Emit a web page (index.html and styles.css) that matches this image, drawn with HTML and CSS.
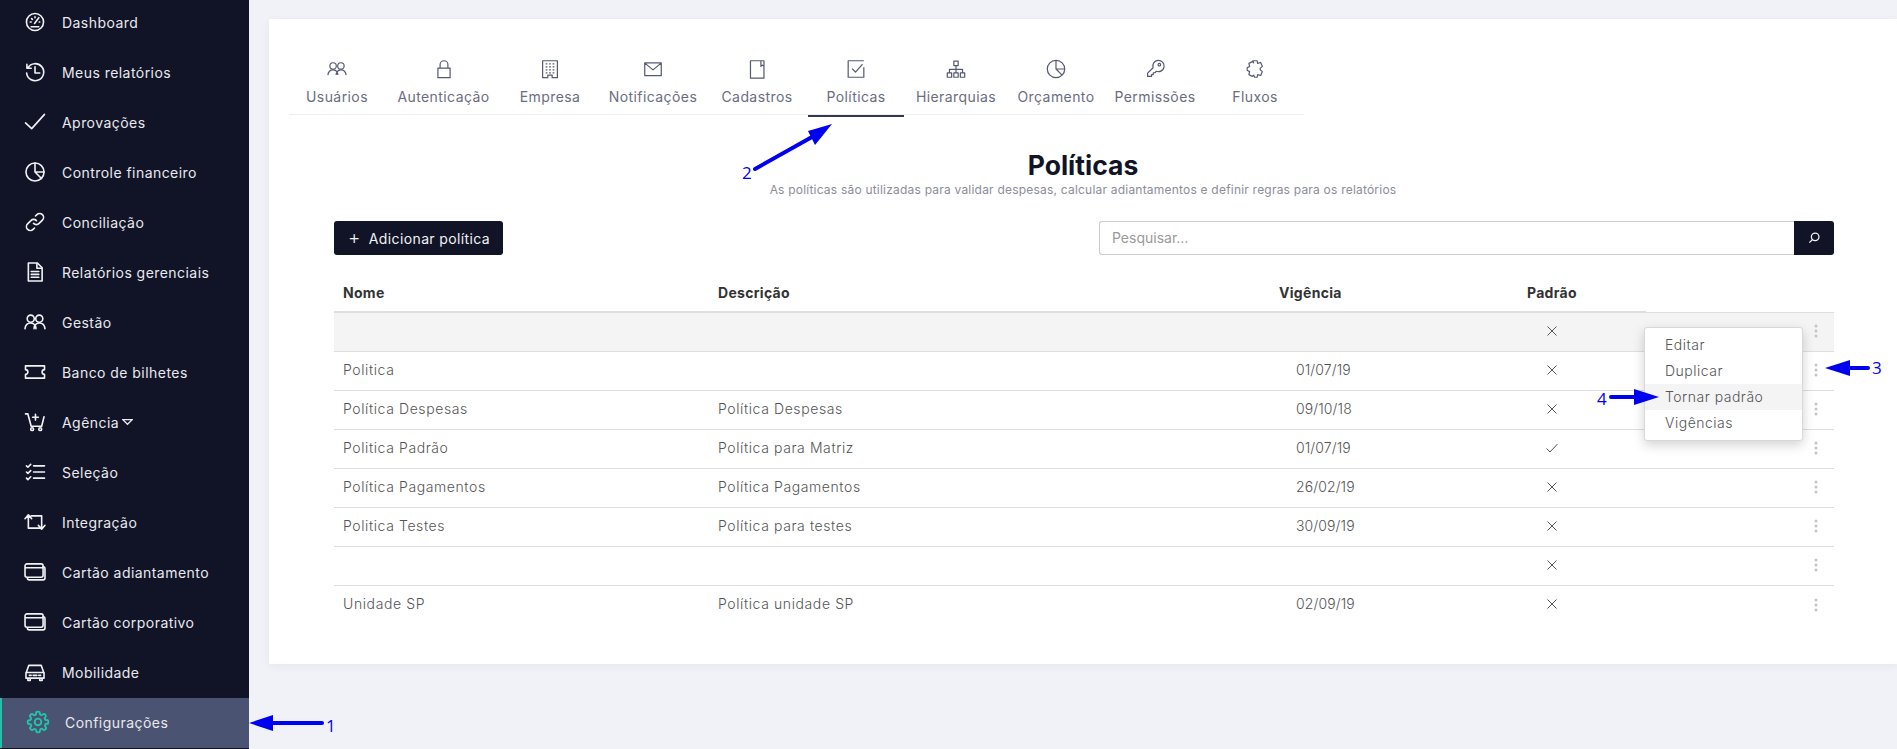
FILE: index.html
```html
<!DOCTYPE html>
<html lang="pt-BR">
<head>
	<meta charset="UTF-8">
	<title>Políticas</title>
	<link rel="stylesheet" href="styles.css">
</head>
<body>
	<div class="app">
		<nav class="sidebar">
			<a class="side-item"><svg class="side-icon" viewBox="0 0 24 24"><circle cx="12" cy="12" r="9"/><path d="M11.500 13.500L16 7.500M7 12h1M8.500 8.500l.7.700M12 6.500v1M16.500 12h.5M8 17h8"/></svg>Dashboard</a>
			<a class="side-item"><svg class="side-icon" viewBox="0 0 24 24"><path d="M4.500 7.500A9 9 0 1 1 3.200 13M3.500 4v4h4.500M12 6.500V13h5"/></svg>Meus relatórios</a>
			<a class="side-item"><svg class="side-icon" viewBox="0 0 24 24"><path d="M2 13l6.500 6L22 4"/></svg>Aprovações</a>
			<a class="side-item"><svg class="side-icon" viewBox="0 0 24 24"><circle cx="12" cy="12" r="9.500"/><path d="M12 2.500V12h9.500M12 12l6.800 6.800"/></svg>Controle financeiro</a>
			<a class="side-item"><svg class="side-icon" viewBox="0 0 24 24"><path d="M10.500 13.500a4 4 0 0 0 5.800 0l3.500-3.500a4.100 4.100 0 0 0-5.800-5.800l-1.500 1.500"/><path d="M13.500 10.500a4 4 0 0 0-5.800 0L4.200 14a4.100 4.100 0 0 0 5.800 5.800l1.500-1.500"/></svg>Conciliação</a>
			<a class="side-item"><svg class="side-icon" viewBox="0 0 24 24"><path d="M5 2.500h9.500l5 5v14H5z"/><path d="M14 3v5h5M8 11.500h8M8 14.500h8M8 17.500h8"/></svg>Relatórios gerenciais</a>
			<a class="side-item"><svg class="side-icon" viewBox="0 0 24 24"><use href="#users"/></svg>Gestão</a>
			<a class="side-item"><svg class="side-icon" viewBox="0 0 24 24"><path d="M2 5.500h20v4a2.500 2.500 0 0 0 0 5v4H2v-4a2.500 2.500 0 0 0 0-5z"/></svg>Banco de bilhetes</a>
			<a class="side-item"><svg class="side-icon" viewBox="0 0 24 24"><path d="M2 3.500h2.500l3.500 13h11l2.500-10M12.500 4v6M9.500 7h6"/><circle cx="9" cy="19.500" r="1.500"/><circle cx="17.500" cy="19.500" r="1.500"/></svg>Agência <svg class="caret" viewBox="0 0 12 8"><path d="M1 1.500h10L6 6.500z"/></svg></a>
			<a class="side-item"><svg class="side-icon" viewBox="0 0 24 24"><path d="M10.500 5.500H22M10.500 12H22M10.500 18.500H22M3 5.500l1.500 1.500 3-3M3 12l1.500 1.500 3-3M3 18.500L4.500 20l3-3"/></svg>Seleção</a>
			<a class="side-item"><svg class="side-icon" viewBox="0 0 24 24"><path d="M1.500 8.500L5 4.500l3.500 4M5 5v13.500h14M22.500 15.500l-3.500 4-3.500-4M19 19V5.500H8"/></svg>Integração</a>
			<a class="side-item"><svg class="side-icon" viewBox="0 0 24 24"><use href="#cards"/></svg>Cartão adiantamento</a>
			<a class="side-item"><svg class="side-icon" viewBox="0 0 24 24"><use href="#cards"/></svg>Cartão corporativo</a>
			<a class="side-item"><svg class="side-icon" viewBox="0 0 24 24"><path d="M3 12l2.500-7h13L21 12M2.500 12.500h19v6h-19zM4.500 18.500V21h2.500v-2.500M17 18.500V21h2.500v-2.500M6 15.500h2M16 15.500h2M10 15.500h4"/></svg>Mobilidade</a>
			<a class="side-item side-active"><svg class="side-icon" viewBox="0 0 24 24"><circle cx="12" cy="12" r="3.500"/><path d="M19.400 15a1.650 1.650 0 0 0 .33 1.820l.06.06a2 2 0 0 1-2.830 2.830l-.06-.06a1.650 1.650 0 0 0-2.820 1.180V21a2 2 0 0 1-4 0v-.09a1.650 1.650 0 0 0-2.820-1.180l-.06.06a2 2 0 0 1-2.830-2.830l.06-.06a1.650 1.650 0 0 0-1.180-2.820H3a2 2 0 0 1 0-4h.09a1.650 1.650 0 0 0 1.180-2.820l-.06-.06a2 2 0 0 1 2.830-2.830l.06.06a1.650 1.650 0 0 0 2.820-1.180V3a2 2 0 0 1 4 0v.09a1.650 1.650 0 0 0 2.820 1.180l.06-.06a2 2 0 0 1 2.830 2.830l-.06.06a1.650 1.650 0 0 0 1.180 2.820H21a2 2 0 0 1 0 4h-.09a1.650 1.650 0 0 0-1.510 1z"/></svg>Configurações</a>
		</nav>

		<main class="main">
			<div class="card">
				<div class="tabs">
					<a class="tab"><svg class="tab-icon" viewBox="0 0 24 24"><use href="#users"/></svg>Usuários</a>
					<a class="tab"><svg class="tab-icon" viewBox="0 0 24 24"><path d="M5 11h14v11H5zM7.500 11V7a4.500 4.500 0 0 1 9 0v4"/></svg>Autenticação</a>
					<a class="tab"><svg class="tab-icon" viewBox="0 0 24 24"><path d="M3.500 2.500h17v19.500h-6v-3h-5v3h-6z"/><path d="M7 6h2M11 6h2M15 6h2M7 9.500h2M11 9.500h2M15 9.500h2M7 13h2M11 13h2M15 13h2M7 16.500h2M11 16.500h2M15 16.500h2"/></svg>Empresa</a>
					<a class="tab"><svg class="tab-icon" viewBox="0 0 24 24"><path d="M2.500 5h19v14.500h-19zM3 5.500l9 7.500 9-7.500"/></svg>Notificações</a>
					<a class="tab"><svg class="tab-icon" viewBox="0 0 24 24"><path d="M4.500 2.500h15.500v20H4.500zM16.500 2.500v6.500l1.800-1.500 1.700 1.500"/></svg>Cadastros</a>
					<a class="tab tab-active"><svg class="tab-icon" viewBox="0 0 24 24"><path d="M21 10v11.500H3v-19h18M7.500 11.500l4 4 8-9"/></svg>Políticas</a>
					<a class="tab"><svg class="tab-icon" viewBox="0 0 24 24"><path d="M9.500 3h5v5h-5zM2 16.500h5v5H2zM9.500 16.500h5v5h-5zM17 16.500h5v5h-5zM12 8v8.500M4.500 16.500V12.500h15v4"/></svg>Hierarquias</a>
					<a class="tab"><svg class="tab-icon" viewBox="0 0 24 24"><circle cx="12" cy="12" r="10"/><path d="M12 2v10h10M12 12l7 7"/></svg>Orçamento</a>
					<a class="tab"><svg class="tab-icon" viewBox="0 0 24 24"><path d="M9.800 10.600a6.500 6.500 0 1 1 3.800 4L12 16.300h-2v2.200H8v2H3.500v-3.800z"/><circle cx="17" cy="7" r="1.500"/></svg>Permissões</a>
					<a class="tab"><svg class="tab-icon" viewBox="0 0 24 24"><path d="M9.500 2.500h5l.5 3 3.500-1 2 4.500-2.500 2v2l2.500 2-2 4.500-3.500-1-.5 3h-3l-1-2.500-1.500 1.500-4-2 .8-3.500-2.800-1.500v-3l2.800-1.500-.8-3.500 4-2 1.500 1.500z" stroke-linejoin="round"/></svg>Fluxos</a>
				</div>

				<div class="page-head">
					<h1 class="page-title">Políticas</h1>
					<p class="page-sub">As políticas são utilizadas para validar despesas, calcular adiantamentos e definir regras para os relatórios</p>
				</div>

				<div class="content">
					<div class="toolbar">
						<button class="btn-add"><span class="btn-plus">+</span>Adicionar política</button>
						<div class="search">
							<span class="search-text">Pesquisar...</span>
							<span class="search-btn"><svg class="search-icon" viewBox="0 0 24 24"><circle cx="14" cy="10" r="6.500"/><path d="M9.500 14.500L4 20"/></svg></span>
						</div>
					</div>

					<div class="table-wrap">
						<table class="grid">
							<colgroup>
								<col class="col-name"><col class="col-desc"><col class="col-date"><col class="col-flag"><col class="col-more">
							</colgroup>
							<thead>
								<tr><th>Nome</th><th>Descrição</th><th>Vigência</th><th>Padrão</th><th class="th-more"></th></tr>
							</thead>
							<tbody>
								<tr class="row-hover"><td></td><td></td><td></td><td class="flag"><svg class="mark"><use href="#no"/></svg></td><td class="more"><svg class="dots"><use href="#dots"/></svg></td></tr>
								<tr><td>Politica</td><td></td><td class="date">01/07/19</td><td class="flag"><svg class="mark"><use href="#no"/></svg></td><td class="more"><svg class="dots"><use href="#dots"/></svg></td></tr>
								<tr><td>Política Despesas</td><td>Política Despesas</td><td class="date">09/10/18</td><td class="flag"><svg class="mark"><use href="#no"/></svg></td><td class="more"><svg class="dots"><use href="#dots"/></svg></td></tr>
								<tr><td>Politica Padrão</td><td>Política para Matriz</td><td class="date">01/07/19</td><td class="flag"><svg class="mark"><use href="#yes"/></svg></td><td class="more"><svg class="dots"><use href="#dots"/></svg></td></tr>
								<tr><td>Política Pagamentos</td><td>Política Pagamentos</td><td class="date">26/02/19</td><td class="flag"><svg class="mark"><use href="#no"/></svg></td><td class="more"><svg class="dots"><use href="#dots"/></svg></td></tr>
								<tr><td>Politica Testes</td><td>Política para testes</td><td class="date">30/09/19</td><td class="flag"><svg class="mark"><use href="#no"/></svg></td><td class="more"><svg class="dots"><use href="#dots"/></svg></td></tr>
								<tr><td></td><td></td><td></td><td class="flag"><svg class="mark"><use href="#no"/></svg></td><td class="more"><svg class="dots"><use href="#dots"/></svg></td></tr>
								<tr><td>Unidade SP</td><td>Política unidade SP</td><td class="date">02/09/19</td><td class="flag"><svg class="mark"><use href="#no"/></svg></td><td class="more"><svg class="dots"><use href="#dots"/></svg></td></tr>
							</tbody>
						</table>

						<ul class="menu">
							<li class="menu-item">Editar</li>
							<li class="menu-item">Duplicar</li>
							<li class="menu-item menu-on">Tornar padrão</li>
							<li class="menu-item">Vigências</li>
						</ul>
					</div>
				</div>
			</div>
		</main>
	</div>

	<!-- setas azuis desenhadas por cima do print -->
	<svg class="notes" viewBox="0 0 1897 749">
		<path class="note-line" d="M270 723H322"/>
		<polygon class="note-head" points="249,723 273,715 273,731"/>
		<text class="note-num" x="326" y="732">1</text>
		<path class="note-line" d="M755 169L812 137"/>
		<polygon class="note-head" points="832,124 808,131 815,145"/>
		<text class="note-num" x="742" y="179">2</text>
		<path class="note-line" d="M1848 368H1868"/>
		<polygon class="note-head" points="1825,368 1850,360 1850,376"/>
		<text class="note-num" x="1872" y="374">3</text>
		<path class="note-line" d="M1611 397H1636"/>
		<polygon class="note-head" points="1659,397 1634,389 1634,405"/>
		<text class="note-num" x="1597" y="405">4</text>
	</svg>

	<svg class="sprite">
		<symbol id="users" viewBox="0 0 24 24"><circle cx="7.500" cy="8.500" r="3.700"/><circle cx="16.500" cy="8.500" r="3.700"/><path d="M1.500 19c.4-3.500 2.500-6 6-6 2.100 0 3.600.8 4.500 2.300.9-1.500 2.400-2.300 4.500-2.300 3.500 0 5.600 2.500 6 6M12 15.300c.6 1 1 2.300 1 3.700M12 15.300c-.6 1-1 2.300-1 3.700"/></symbol>
		<symbol id="cards" viewBox="0 0 24 24"><path d="M3.500 17.500a2 2 0 0 1-2-2V5.500a2 2 0 0 1 2-2h15a2 2 0 0 1 2 2v10a2 2 0 0 1-2 2zM1.500 7.500h19"/><path d="M20.500 6.500h.5a1.700 1.700 0 0 1 1.500 1.800v10a2 2 0 0 1-2 2H6a2 2 0 0 1-2-2"/></symbol>
		<symbol id="no" viewBox="0 0 12 12"><path d="M1.500 1.500l9 9M10.500 1.500l-9 9"/></symbol>
		<symbol id="yes" viewBox="0 0 12 12"><path d="M.5 6.500L4 10l7.500-8"/></symbol>
		<symbol id="dots" viewBox="0 0 4 14"><circle cx="2" cy="2" r="1.500"/><circle cx="2" cy="7" r="1.500"/><circle cx="2" cy="12" r="1.500"/></symbol>
	</svg>
</body>
</html>
```

FILE: styles.css
```css
* {
	box-sizing: border-box;
}
html, body {
	margin: 0;
	height: 749px;
	overflow: hidden;
}
body {
	position: relative;
	background: #f1f2f8;
	font-family: Inter, "Open Sans", sans-serif;
	font-size: 14px;
}
.app {
	display: flex;
	height: 749px;
}
.sprite {
	width: 0;
	height: 0;
	position: absolute;
}

/* menu lateral */
.sidebar {
	width: 249px;
	flex: none;
	background: #101426;
	overflow: hidden;
}
.side-item {
	display: flex;
	align-items: center;
	height: 50px;
	padding: 0 0 2px 23px;
	color: #e9e9ef;
	font-size: 14px;
	letter-spacing: .45px;
	position: relative;
	top: -2px;
}
.side-icon {
	width: 24px;
	height: 24px;
	margin-right: 15px;
	flex: none;
	fill: none;
	stroke: #f2f2f5;
	stroke-width: 1.700;
	stroke-linejoin: round;
	stroke-linecap: round;
	transform: scale(.95);
}
.caret {
	width: 11px;
	height: 8px;
	margin-left: 3px;
	fill: none;
	stroke: #e9e9ef;
	stroke-width: 1.300;
}
.side-active {
	background: #4b5372;
	border-left: 2px solid #1fc4a8;
	padding-left: 24px;
}
.side-active .side-icon {
	stroke: #22c4a9;
	stroke-width: 2;
}

/* conteudo */
.main {
	flex: 1;
	padding: 19px 0 0 20px;
	min-width: 0;
}
.card {
	background: #fff;
	height: 645px;
	padding: 36px 0 0 20px;
	box-shadow: 0 2px 8px rgba(40, 45, 80, .06);
}
.tabs {
	display: grid;
	grid-template-columns: 96px 117px 96px 110px 98px 98px 104px 96px 102px 98px;
	width: 1015px;
	border-bottom: 1px solid #eceef3;
}
.tab {
	display: flex;
	flex-direction: column;
	align-items: center;
	height: 59px;
	padding-top: 2px;
	color: #6a6d7f;
	font-size: 14px;
	letter-spacing: .42px;
	line-height: 20px;
}
.tab-active {
	height: 62px;
	margin: 0 0 -3px 2px;
	border-bottom: 2px solid #33364f;
}
.tab-icon {
	width: 24px;
	height: 24px;
	margin-bottom: 6px;
	fill: none;
	stroke: #555a72;
	stroke-width: 1.400;
	stroke-linejoin: round;
	transform: scale(.87);
}
.page-head {
	text-align: center;
	margin: 35px 0 0 -20px;
}
.page-title {
	margin: 0;
	color: #101426;
	font-size: 26.500px;
	font-weight: 700;
	line-height: 30px;
}
.page-sub {
	margin: 2px 0 0;
	color: #8b8d99;
	font-size: 12px;
	letter-spacing: .21px;
	line-height: 16px;
}
.content {
	margin: 23px 63px 0 45px;
}
.toolbar {
	display: flex;
	justify-content: space-between;
	height: 34px;
}
.btn-add {
	display: flex;
	align-items: center;
	width: 169px;
	height: 34px;
	padding: 0 0 0 14px;
	border: 0;
	border-radius: 3px;
	background: #101426;
	color: #f2f2f5;
	font-family: inherit;
	font-size: 14px;
	letter-spacing: .38px;
}
.btn-plus {
	font-size: 19px;
	font-weight: 300;
	margin-right: 8px;
	line-height: 20px;
}
.search {
	display: flex;
	width: 735px;
	height: 34px;
	border-radius: 3px;
}
.search-text {
	flex: 1;
	padding: 0 12px;
	border: 1px solid #ccc;
	border-right: 0;
	border-radius: 3px 0 0 3px;
	color: #9a9a9a;
	font-size: 14px;
	line-height: 32px;
}
.search-btn {
	display: flex;
	align-items: center;
	justify-content: center;
	width: 40px;
	background: #101426;
	border-radius: 0 3px 3px 0;
}
.search-icon {
	width: 14px;
	height: 14px;
	fill: none;
	stroke: #f2f2f5;
	stroke-width: 2.200;
}

/* tabela */
.table-wrap {
	position: relative;
}
.grid {
	width: 1500px;
	table-layout: fixed;
	border-collapse: separate;
	border-spacing: 0;
}
.col-name { width: 375px; }
.col-desc { width: 561px; }
.col-date { width: 248px; }
.col-flag { width: 128px; }
.col-more { width: 188px; }
.grid th {
	height: 58px;
	padding: 28px 0 8px 9px;
	border-bottom: 2px solid #dedede;
	color: #333;
	font-size: 14px;
	font-weight: 700;
	line-height: 20px;
	text-align: left;
	letter-spacing: .3px;
}
.grid .th-more {
	border-bottom: 1px solid #dedede;
}
.grid td {
	height: 39px;
	padding: 0 0 4px 9px;
	border-bottom: 1px solid #dedede;
	color: #555;
	font-size: 14px;
	font-weight: 300;
	letter-spacing: .6px;
}
.grid tr:last-child td {
	border-bottom: 0;
}
.grid .row-hover td {
	background: #f4f4f4;
}
.grid .date {
	padding-left: 26px;
	letter-spacing: .1px;
}
.grid .flag {
	padding: 0 0 3px 28px;
}
.grid .more {
	padding: 0 16px 5px 0;
	text-align: right;
}
.mark {
	display: block;
	width: 12px;
	height: 12px;
	fill: none;
	stroke: #555;
	stroke-width: 1;
}
.dots {
	display: inline-block;
	vertical-align: middle;
	width: 4px;
	height: 14px;
	fill: #c4c4c4;
}
.menu {
	position: absolute;
	left: 1310px;
	top: 72px;
	width: 159px;
	margin: 0;
	padding: 4px 0;
	list-style: none;
	background: #fff;
	border: 1px solid #d8d8d8;
	border-radius: 3px;
	box-shadow: 0 4px 12px rgba(0, 0, 0, .18);
}
.menu-item {
	height: 26px;
	padding-left: 20px;
	color: #555;
	font-size: 14px;
	font-weight: 300;
	line-height: 26px;
	letter-spacing: .5px;
}
.menu-on {
	background: #f4f4f4;
}

/* anotacoes */
.notes {
	position: absolute;
	left: 0;
	top: 0;
	width: 1897px;
	height: 749px;
	pointer-events: none;
}
.note-line {
	fill: none;
	stroke: #0000f0;
	stroke-width: 4;
	stroke-linecap: round;
}
.note-head {
	fill: #0000f0;
}
.note-num {
	fill: #0000f0;
	font-family: "Open Sans", sans-serif;
	font-size: 17px;
}
```
